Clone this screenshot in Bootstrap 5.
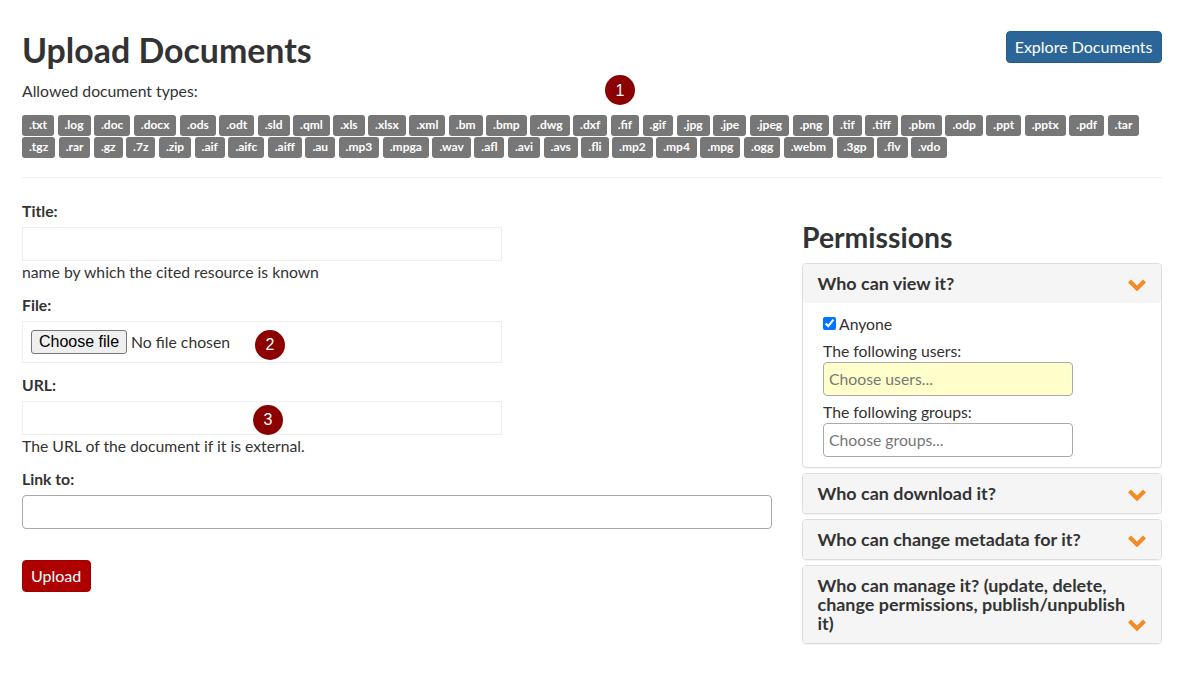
<!doctype html>
<html lang="en">
<head>
<meta charset="utf-8">
<title>Upload Documents</title>
<link href="https://cdn.jsdelivr.net/npm/bootstrap@5.3.0/dist/css/bootstrap.min.css" rel="stylesheet">
<style>
body{font-family:"Lato",sans-serif;font-size:15.75px;line-height:1.42857;color:#333;background:#fff;}
.pg{padding:31px 17px 0 22px;position:relative;height:673px;overflow:hidden;}
.pg-head{height:32px;}
.pg-title{font-size:33.9px;font-weight:700;line-height:1.1;margin:0;padding-top:1px;color:#333;}
.btn-explore{background:#2c6699;border:1px solid #255a8a;color:#fff;font-size:16px;line-height:20px;padding:5px 8.5px 5px 8px;border-radius:4px;}
.types-label{margin:0;padding-top:17px;height:52px;line-height:21px;}
.types{width:1140px;column-gap:3.47px;row-gap:1px;}
.chip{display:block;background:#777;color:#fff;font-size:12px;font-weight:700;line-height:12px;padding:4px 7px 5px;border-radius:3px;height:21px;}
.rule{margin:19px 0 0;border:0;border-top:1px solid #eee;opacity:1;}
.cols{margin-top:22px;gap:30px;width:1140px;}
.left-col{width:750px;flex:none;}
.right-col{width:360px;flex:none;padding-top:22px;}
.fld-label{font-weight:700;display:block;margin:0 0 6px;line-height:21px;height:21px;}
.plain-input{display:block;width:480px;height:34px;border:1px solid #eee;background:#fff;padding:6px 12px;}
.file-box{width:480px;height:42px;border:1px solid #eee;padding:0 8px;margin-bottom:11px;gap:4px;}
.file-name{line-height:19px;padding-bottom:2px;}
.file-btn{background:#efefef;border:1px solid #767676;border-radius:3px;font-family:"Liberation Sans",sans-serif;font-size:16px;line-height:18px;padding:2px 7px;color:#000;}
.hint{line-height:19px;margin:1px 0 13px;}
.link-input{display:block;width:750px;height:34px;border:1px solid #aaa;border-radius:4px;background:#fff;}
.btn-upload{background:#af0000;border:1px solid #a00000;color:#fff;font-size:16px;line-height:20px;padding:5px 8.5px 5px 8px;border-radius:4px;margin-top:31px;}
.perm-title{font-size:28.35px;font-weight:700;line-height:1.1;margin:0 0 10px;color:#333;height:31px;}
.perm{border:1px solid #ddd;border-radius:4px;margin-bottom:5px;box-shadow:0 1px 1px rgba(0,0,0,.05);}
.perm-head{background:#f5f5f5;padding:10px 15px 10px 14.5px;display:flex;justify-content:space-between;align-items:flex-end;border-radius:3px;}
.perm-head.single{padding-top:9px;}
.perm-head h4{font-size:17.95px;font-weight:700;line-height:19px;margin:0;padding:0;color:#333;width:312px;}
.perm-head svg{flex:none;margin:0 0 2px;width:18px;height:12px;}
.single h4{line-height:20px;}
.perm-body{padding:10px 20px 10px;height:164px;}
.perm-body label{display:block;line-height:21px;margin-bottom:1px;}
.perm-body .anyone{display:flex;align-items:center;gap:3px;height:21px;margin-bottom:6px;}
.anyone input{margin:0;width:13px;height:13px;}
.choose{display:block;width:250px;height:34px;border:1px solid #aaa;border-radius:4px;padding:4px 5px 6px;font-size:15.75px;color:#333;margin-bottom:5px;}
.choose::placeholder{color:#777;}
.choose.tint{background:#ffc;}
.pin{position:absolute;width:30px;height:30px;border-radius:50%;background:#8b0000;color:#fff;font-family:"Liberation Sans",sans-serif;font-size:16px;line-height:30px;text-align:center;}
.pin-a{left:605px;top:75px;line-height:31px;}
.pin-b{left:255px;top:330px;}
.pin-c{left:253px;top:405px;}
</style>
</head>
<body>
<div class="pg">
  <div class="d-flex justify-content-between align-items-start pg-head">
    <h1 class="pg-title">Upload Documents</h1>
    <a href="#" class="btn btn-explore">Explore Documents</a>
  </div>
  <p class="types-label">Allowed document types:</p>
  <div class="types d-flex flex-wrap">
    <span class="chip">.txt</span><span class="chip">.log</span><span class="chip">.doc</span><span class="chip">.docx</span><span class="chip">.ods</span><span class="chip">.odt</span><span class="chip">.sld</span><span class="chip">.qml</span><span class="chip">.xls</span><span class="chip">.xlsx</span><span class="chip">.xml</span><span class="chip">.bm</span><span class="chip">.bmp</span><span class="chip">.dwg</span><span class="chip">.dxf</span><span class="chip">.fif</span><span class="chip">.gif</span><span class="chip">.jpg</span><span class="chip">.jpe</span><span class="chip">.jpeg</span><span class="chip">.png</span><span class="chip">.tif</span><span class="chip">.tiff</span><span class="chip">.pbm</span><span class="chip">.odp</span><span class="chip">.ppt</span><span class="chip">.pptx</span><span class="chip">.pdf</span><span class="chip">.tar</span><span class="chip">.tgz</span><span class="chip">.rar</span><span class="chip">.gz</span><span class="chip">.7z</span><span class="chip">.zip</span><span class="chip">.aif</span><span class="chip">.aifc</span><span class="chip">.aiff</span><span class="chip">.au</span><span class="chip">.mp3</span><span class="chip">.mpga</span><span class="chip">.wav</span><span class="chip">.afl</span><span class="chip">.avi</span><span class="chip">.avs</span><span class="chip">.fli</span><span class="chip">.mp2</span><span class="chip">.mp4</span><span class="chip">.mpg</span><span class="chip">.ogg</span><span class="chip">.webm</span><span class="chip">.3gp</span><span class="chip">.flv</span><span class="chip">.vdo</span>
  </div>
  <hr class="rule">
  <div class="d-flex cols">
    <form class="left-col">
      <label class="fld-label">Title:</label>
      <input class="plain-input" type="text">
      <p class="hint">name by which the cited resource is known</p>
      <label class="fld-label">File:</label>
      <div class="file-box d-flex align-items-center"><button type="button" class="file-btn">Choose file</button><span class="file-name">No file chosen</span></div>
      <label class="fld-label">URL:</label>
      <input class="plain-input" type="text">
      <p class="hint">The URL of the document if it is external.</p>
      <label class="fld-label">Link to:</label>
      <input class="link-input" type="text">
      <button type="button" class="btn btn-upload">Upload</button>
    </form>
    <div class="right-col">
      <h2 class="perm-title">Permissions</h2>
      <div class="perm">
        <div class="perm-head single"><h4>Who can view it?</h4><svg viewBox="0 0 18 12"><path d="M1.5 2 9 9.5 16.5 2" fill="none" stroke="#f58a22" stroke-width="4"/></svg></div>
        <div class="perm-body">
          <label class="anyone"><input type="checkbox" checked>Anyone</label>
          <label>The following users:</label>
          <input class="choose tint" placeholder="Choose users...">
          <label>The following groups:</label>
          <input class="choose" placeholder="Choose groups...">
        </div>
      </div>
      <div class="perm">
        <div class="perm-head single"><h4>Who can download it?</h4><svg viewBox="0 0 18 12"><path d="M1.5 2 9 9.5 16.5 2" fill="none" stroke="#f58a22" stroke-width="4"/></svg></div>
      </div>
      <div class="perm">
        <div class="perm-head single"><h4>Who can change metadata for it?</h4><svg viewBox="0 0 18 12"><path d="M1.5 2 9 9.5 16.5 2" fill="none" stroke="#f58a22" stroke-width="4"/></svg></div>
      </div>
      <div class="perm">
        <div class="perm-head"><h4>Who can manage it? (update, delete, change permissions, publish/unpublish it)</h4><svg viewBox="0 0 18 12"><path d="M1.5 2 9 9.5 16.5 2" fill="none" stroke="#f58a22" stroke-width="4"/></svg></div>
      </div>
    </div>
  </div>
  <span class="pin pin-a">1</span>
  <span class="pin pin-b">2</span>
  <span class="pin pin-c">3</span>
</div>
<script src="https://cdn.jsdelivr.net/npm/bootstrap@5.3.0/dist/js/bootstrap.bundle.min.js"></script>
</body>
</html>
